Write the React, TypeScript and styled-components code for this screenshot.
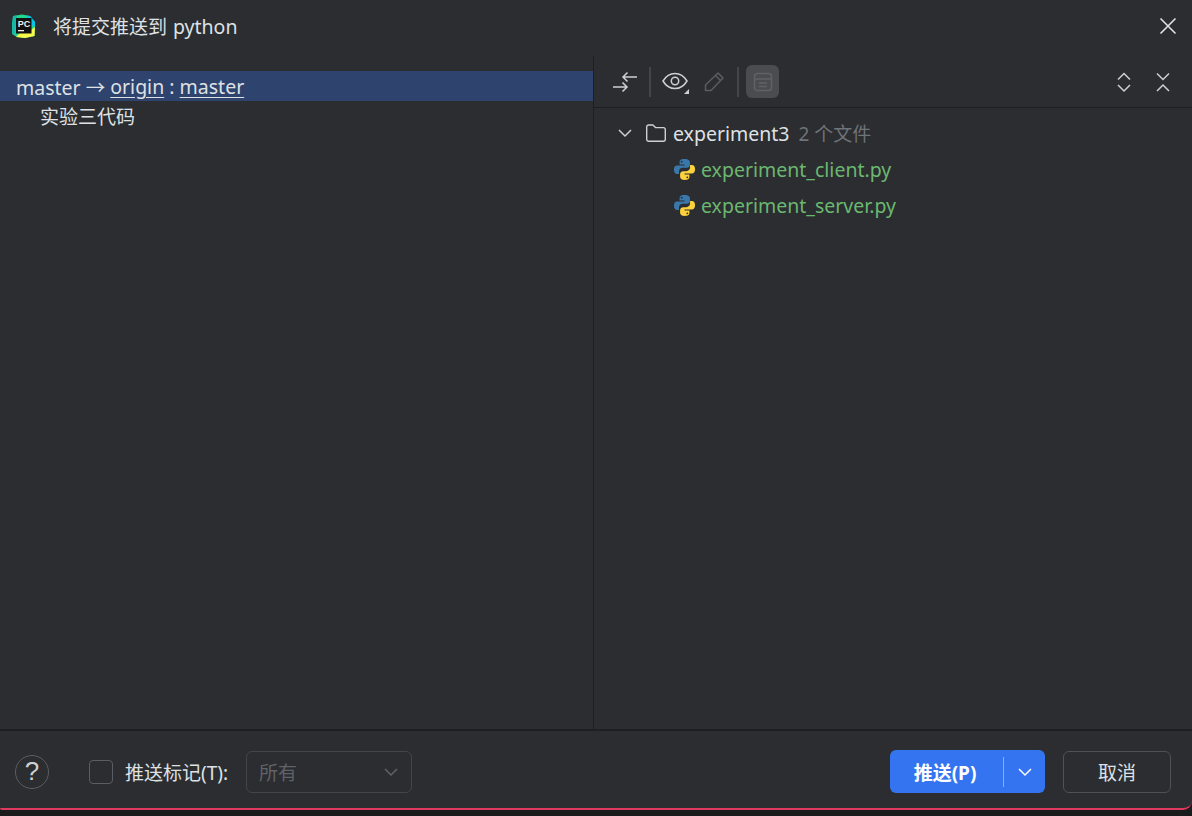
import React from "react";
import styled, { createGlobalStyle } from "styled-components";

const FONT = `"Noto Sans", "Noto Sans CJK SC", sans-serif`;

const GlobalStyle = createGlobalStyle`
  html, body {
    margin: 0;
    padding: 0;
    height: 100%;
    background: #1a1b1d;
    overflow: hidden;
  }
  #root {
    height: 816px;
  }
`;

const Dialog = styled.div`
  width: 1192px;
  height: 810px;
  box-sizing: border-box;
  display: flex;
  flex-direction: column;
  background: #2b2d30;
  border-bottom: 2px solid #e0385f;
  border-bottom-right-radius: 9px;
  border-bottom-left-radius: 2px;
  font-family: ${FONT};
  color: #dfe1e5;
  overflow: hidden;
`;

const TitleBar = styled.div`
  height: 56px;
  flex: none;
  display: flex;
  align-items: center;
  padding: 0 15px 5px 10px;
  box-sizing: border-box;
`;

const Title = styled.div`
  margin-left: 17px;
  font-size: 19px;
  flex: 1;
`;

const Latin = styled.span`
  font-size: 19.5px;
  margin-left: 1px;
`;

const Body = styled.div`
  flex: 1;
  display: flex;
  min-height: 0;
  border-bottom: 2px solid #1e1f22;
`;

const LeftPane = styled.div`
  width: 594px;
  flex: none;
  padding-top: 15px;
  box-sizing: border-box;
  border-right: 1px solid #1e1f22;
`;

const PushRow = styled.div`
  height: 30px;
  display: flex;
  align-items: center;
  padding: 1px 0 0 16px;
  box-sizing: border-box;
  background: #2e436e;
  font-size: 19.5px;
  white-space: pre;
`;

const LinkText = styled.span`
  text-decoration: underline;
  text-underline-offset: 3px;
`;

const CommitRow = styled.div`
  height: 30px;
  display: flex;
  align-items: center;
  padding-left: 40px;
  font-size: 19px;
`;

const RightPane = styled.div`
  flex: 1;
  display: flex;
  flex-direction: column;
`;

const Toolbar = styled.div`
  height: 52px;
  flex: none;
  display: flex;
  align-items: center;
  padding: 0 17px 0 18px;
  box-sizing: border-box;
  border-bottom: 1px solid #1e1f22;
`;

const ToolIcon = styled.span`
  width: 24px;
  height: 24px;
  display: flex;
  align-items: center;
  justify-content: center;
`;

const PencilTool = styled(ToolIcon)`
  margin-left: 12px;
`;

const Separator = styled.span`
  width: 2px;
  height: 30px;
  background: #43454a;
  margin: 0 11px;
`;

const ActiveTool = styled.span`
  width: 33px;
  height: 33px;
  border-radius: 6px;
  background: #4a4c50;
  display: flex;
  align-items: center;
  justify-content: center;
  margin-left: -4px;
`;

const ToolSpacer = styled.span`
  flex: 1;
`;

const RightTools = styled.div`
  display: flex;
  gap: 15px;
`;

const Tree = styled.div`
  padding-top: 7px;
`;

const TreeRow = styled.div<{ $indent: number }>`
  height: 36px;
  display: flex;
  align-items: center;
  padding-left: ${(p) => p.$indent}px;
  font-size: 19.5px;
`;

const FolderChevron = styled.span`
  width: 28px;
  display: flex;
  align-items: center;
`;

const FolderName = styled.span`
  margin-left: 6px;
`;

const FileCount = styled.span`
  margin-left: 9px;
  color: #6f737a;
  font-size: 19px;
`;

const FileName = styled.span`
  margin-left: 5px;
  color: #6ab870;
`;

const Footer = styled.div`
  height: 77px;
  flex: none;
  display: flex;
  align-items: center;
  padding: 4px 21px 0 15px;
  box-sizing: border-box;
`;

const HelpButton = styled.span`
  width: 34px;
  height: 34px;
  box-sizing: border-box;
  border: 1px solid #5a5d63;
  border-radius: 50%;
  display: flex;
  align-items: center;
  justify-content: center;
  font-family: "Liberation Sans", sans-serif;
  font-size: 26px;
  color: #ced0d6;
`;

const CheckBox = styled.span`
  width: 24px;
  height: 24px;
  box-sizing: border-box;
  margin-left: 40px;
  border: 1.5px solid #5a5d63;
  border-radius: 4px;
`;

const TagLabel = styled.span`
  margin-left: 12px;
  font-size: 19px;
`;

const Select = styled.div`
  width: 166px;
  height: 42px;
  margin-left: 18px;
  box-sizing: border-box;
  border: 1px solid #43454a;
  border-radius: 6px;
  display: flex;
  align-items: center;
  justify-content: space-between;
  padding: 0 12px;
  color: #5f6268;
  font-size: 19px;
`;

const FooterSpacer = styled.span`
  flex: 1;
`;

const PushButton = styled.div`
  width: 155px;
  height: 43px;
  border-radius: 6px;
  background: #3574f0;
  color: #fff;
  display: flex;
  align-items: center;
  font-size: 19px;
  font-weight: 700;
`;

const PushLabel = styled.span`
  width: 110px;
  margin-right: 3px;
  text-align: center;
`;

const PushDivider = styled.span`
  width: 1px;
  height: 30px;
  background: #88aef7;
`;

const PushArrow = styled.span`
  flex: 1;
  display: flex;
  justify-content: center;
`;

const CancelButton = styled.div`
  width: 108px;
  height: 42px;
  margin-left: 18px;
  box-sizing: border-box;
  border: 1px solid #4e5157;
  border-radius: 6px;
  display: flex;
  align-items: center;
  justify-content: center;
  font-size: 19px;
`;

const PyCharmLogo = () => (
  <svg width="26" height="26" viewBox="0 0 26 26">
    <path d="M3 3 L12 1.500 L20 3 L25 9 L24.500 23 L15 25 L7 24 L2 21 Z" fill="#21d789" />
    <path d="M16 2.500 L20 3 L25 9 L24.500 15 L22 12 Z" fill="#07c3f2" />
    <path d="M6 24 L15 25 L24.500 23 L25 14 L20 18 L10 20 Z" fill="#fcf84a" />
    <path d="M2 10 L3 3 L7 2.500 L5 21 L2 21 Z" fill="#17b8a6" />
    <rect x="6" y="5" width="15.500" height="15.500" fill="#111" />
    <rect x="8" y="17" width="6" height="1.300" fill="#eee" />
    <text x="7.700" y="13.500" fontFamily="Liberation Sans, sans-serif" fontSize="9" fontWeight="700" fill="#eee">PC</text>
  </svg>
);

const PythonIcon = () => (
  <svg width="23" height="23" viewBox="0 0 22 22">
    <path d="M10.800 1C7 1 6.300 2.400 6.300 4v2.200h4.700v1H3.900C2 7.200.9 8.700.9 11.200s1.200 4 3 4h1.800v-2.400c0-1.900 1.600-3.400 3.500-3.400h4.200c1.600 0 2.800-1.300 2.800-2.900V4c0-1.600-1.300-3-5.400-3zM8.300 2.600a.9.9 0 1 1 0 1.800.9.9 0 0 1 0-1.800z" fill="#3a78ab" />
    <path d="M11.200 21c3.800 0 4.500-1.400 4.500-3v-2.200H11v-1h7.100c1.900 0 3-1.500 3-4s-1.200-4-3-4h-1.800v2.400c0 1.900-1.600 3.400-3.500 3.400H9.600c-1.600 0-2.800 1.300-2.800 2.900V18c0 1.600 1.300 3 4.400 3zm2.500-1.600a.9.9 0 1 1 0-1.800.9.9 0 0 1 0 1.800z" fill="#fdd23d" />
  </svg>
);

const FolderIcon = () => (
  <svg width="22" height="20" viewBox="0 0 22 20" fill="none" stroke="#ced0d6" strokeWidth="1.400">
    <path d="M1.700 4a2 2 0 0 1 2-2h4.200l2.600 2.600h7.800a2 2 0 0 1 2 2v9.700a2 2 0 0 1-2 2H3.700a2 2 0 0 1-2-2z" strokeLinejoin="round" />
  </svg>
);

const Chevron = ({ color, size = 16 }: { color: string; size?: number }) => (
  <svg width={size} height={size} viewBox="0 0 16 16" fill="none" stroke={color} strokeWidth="1.500">
    <path d="M2 5 8 11l6-6" />
  </svg>
);

const ExchangeIcon = () => (
  <svg width="26" height="26" viewBox="0 0 26 26" fill="none" stroke="#ced0d6" strokeWidth="1.500">
    <path d="M25 8H11M15.500 3.500 11 8l4.500 4.500" />
    <path d="M1 18h14M10.500 13.500 15 18l-4.500 4.500" />
  </svg>
);

const EyeIcon = () => (
  <svg width="28" height="26" viewBox="0 0 28 26" fill="none" stroke="#ced0d6" strokeWidth="1.500">
    <path d="M1 12c3-5 7.200-7.500 12-7.500S22 7 25 12c-3 5-7.200 7.500-12 7.500S4 17 1 12z" />
    <circle cx="13" cy="12" r="3.700" />
    <path d="M27 20v5h-5z" fill="#ced0d6" stroke="none" />
  </svg>
);

const PencilIcon = () => (
  <svg width="22" height="22" viewBox="0 0 22 22" fill="none" stroke="#5a5d63" strokeWidth="1.500">
    <path d="M15 2l5 5L8 19.500H2.500V14z" strokeLinejoin="round" />
    <path d="M12.500 4.500l5 5" />
  </svg>
);

const PreviewIcon = () => (
  <svg width="20" height="20" viewBox="0 0 20 20" fill="none" stroke="#5f6165" strokeWidth="1.500">
    <rect x="1.500" y="1.500" width="17" height="17" rx="3" />
    <path d="M1.500 7h17M6 11h8M6 14.500h8" />
  </svg>
);

const ExpandIcon = () => (
  <svg width="24" height="24" viewBox="0 0 24 24" fill="none" stroke="#ced0d6" strokeWidth="1.500">
    <path d="M6 9.500 12 3.500 18 9.500M6 15 12 21 18 15" />
  </svg>
);

const CollapseIcon = () => (
  <svg width="24" height="24" viewBox="0 0 24 24" fill="none" stroke="#ced0d6" strokeWidth="1.500">
    <path d="M6 3.500 12 9.500 18 3.500M6 21 12 15 18 21" />
  </svg>
);

const CloseIcon = () => (
  <svg width="18" height="18" viewBox="0 0 18 18" stroke="#dfe1e5" strokeWidth="1.600">
    <path d="M1.500 1.500l15 15M16.500 1.500l-15 15" />
  </svg>
);

const files = ["experiment_client.py", "experiment_server.py"];

const App = () => (
  <>
    <GlobalStyle />
    <Dialog>
      <TitleBar>
        <PyCharmLogo />
        <Title>将提交推送到 <Latin>python</Latin></Title>
        <CloseIcon />
      </TitleBar>
      <Body>
        <LeftPane>
          <PushRow>
            master → <LinkText>origin</LinkText> : <LinkText>master</LinkText>
          </PushRow>
          <CommitRow>实验三代码</CommitRow>
        </LeftPane>
        <RightPane>
          <Toolbar>
            <ExchangeIcon />
            <Separator />
            <EyeIcon />
            <PencilTool><PencilIcon /></PencilTool>
            <Separator />
            <ActiveTool><PreviewIcon /></ActiveTool>
            <ToolSpacer />
            <RightTools>
              <ToolIcon><ExpandIcon /></ToolIcon>
              <ToolIcon><CollapseIcon /></ToolIcon>
            </RightTools>
          </Toolbar>
          <Tree>
            <TreeRow $indent={23}>
              <FolderChevron><Chevron color="#ced0d6" /></FolderChevron>
              <FolderIcon />
              <FolderName>experiment3</FolderName>
              <FileCount>2 个文件</FileCount>
            </TreeRow>
            {files.map((name) => (
              <TreeRow $indent={79} key={name}>
                <PythonIcon />
                <FileName>{name}</FileName>
              </TreeRow>
            ))}
          </Tree>
        </RightPane>
      </Body>
      <Footer>
        <HelpButton>?</HelpButton>
        <CheckBox />
        <TagLabel>推送标记(T):</TagLabel>
        <Select>
          所有
          <Chevron color="#5f6268" />
        </Select>
        <FooterSpacer />
        <PushButton>
          <PushLabel>推送(P)</PushLabel>
          <PushDivider />
          <PushArrow><Chevron color="#ffffff" /></PushArrow>
        </PushButton>
        <CancelButton>取消</CancelButton>
      </Footer>
    </Dialog>
  </>
);

export default App;
